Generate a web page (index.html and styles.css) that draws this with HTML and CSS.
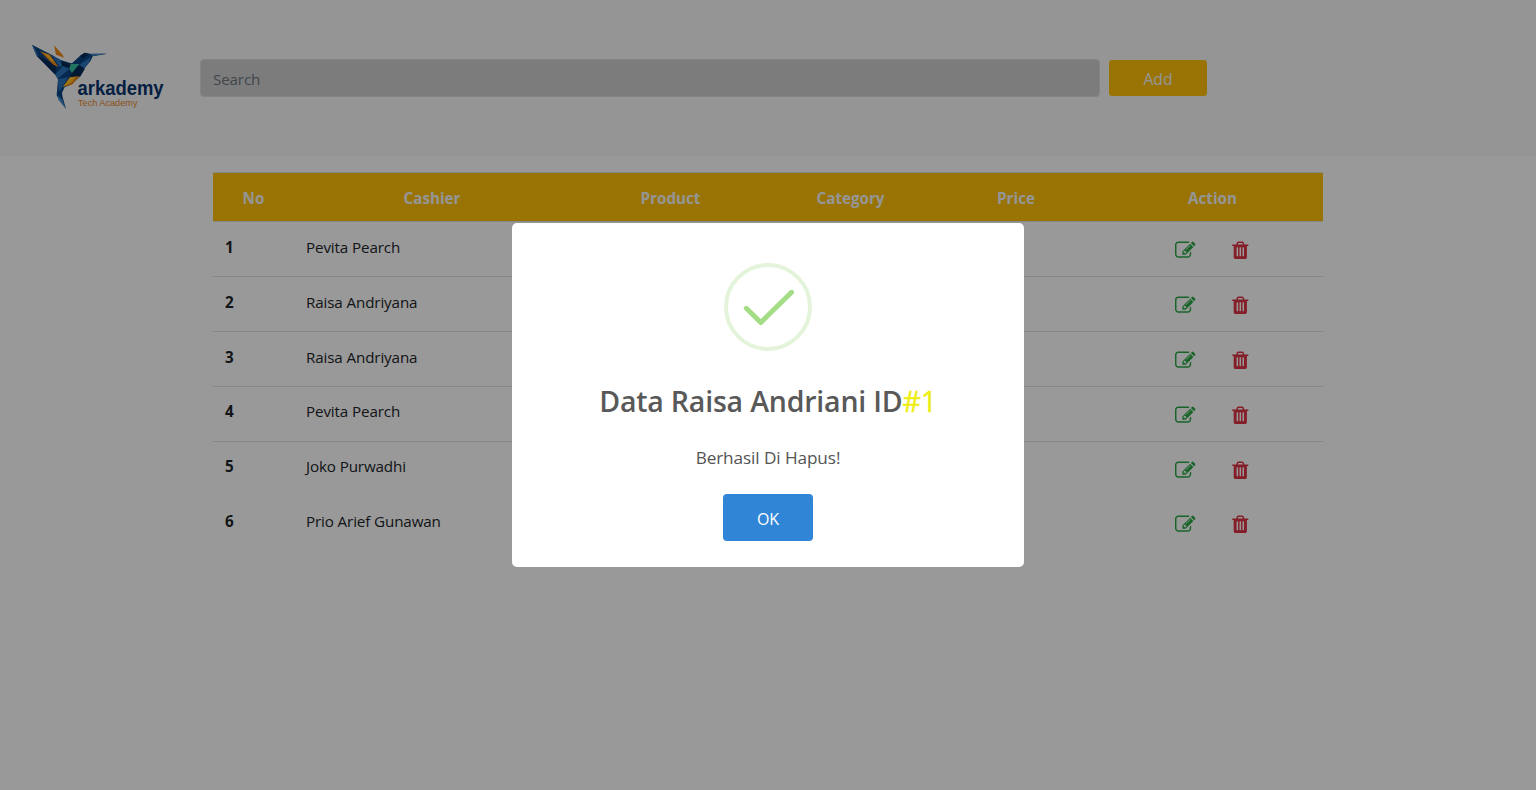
FILE: index.html
```html
<!DOCTYPE html>
<html lang="id">
<head>
<meta charset="utf-8">
<title>Arkademy</title>
<link rel="stylesheet" href="styles.css">
</head>
<body>
<svg class="sprite" aria-hidden="true">
  <symbol id="edit" viewBox="0 0 1792 1792"><path d="M888 1184l116-116-152-152-116 116v56h96v96h56zm440-720q-16-16-33 1l-350 350q-17 17-1 33t33-1l350-350q17-17 1-33zm80 594v190q0 119-84.500 203.500t-203.500 84.500h-832q-119 0-203.500-84.500t-84.500-203.500v-832q0-119 84.500-203.500t203.500-84.500h832q63 0 117 25 15 7 18 23 3 17-9 29l-49 49q-14 14-32 8-23-6-45-6h-832q-66 0-113 47t-47 113v832q0 66 47 113t113 47h832q66 0 113-47t47-113v-126q0-13 9-22l64-64q15-15 35-7t20 29zm-96-738l288 288-672 672h-288v-288zm444 132l-92 92-288-288 92-92q28-28 68-28t68 28l152 152q28 28 28 68t-28 68z"/></symbol>
  <symbol id="trash" viewBox="0 0 1792 1792"><path d="M704 1376v-704q0-14-9-23t-23-9h-64q-14 0-23 9t-9 23v704q0 14 9 23t23 9h64q14 0 23-9t9-23zm256 0v-704q0-14-9-23t-23-9h-64q-14 0-23 9t-9 23v704q0 14 9 23t23 9h64q14 0 23-9t9-23zm256 0v-704q0-14-9-23t-23-9h-64q-14 0-23 9t-9 23v704q0 14 9 23t23 9h64q14 0 23-9t9-23zm-544-992h448l-48-117q-7-9-17-11h-317q-10 2-17 11zm928 32v64q0 14-9 23t-23 9h-96v948q0 83-47 143.500t-113 60.500h-832q-66 0-113-58.500t-47-141.500v-952h-96q-14 0-23-9t-9-23v-64q0-14 9-23t23-9h309l70-167q15-37 54-63t79-26h320q40 0 79 26t54 63l70 167h309q14 0 23 9t9 23z"/></symbol>
</svg>
<header class="navbar">
  <svg class="logo" width="136" height="70" viewBox="0 0 136 70">
    <g transform="translate(-2 -3) scale(.3333)">
      <path fill="#0a4584" d="M6 14L60 42 92 60 118 68 126 70 152 46 164 38 178 41 232 41 188 49 182 62 166 82 150 110 122 134 104 142 96 158 98 172 108 206 86 178 80 166 84 118 76 104 20 48Z"/>
      <path fill="#3f86c6" d="M6 14L12 22 26 50 18 44Z"/>
      <path fill="#062a56" d="M20 46L56 64 78 80 76 104ZM90 62L124 72 118 84 98 78ZM118 84L126 98 120 110 150 110 164 88 144 74ZM150 48L164 38 178 42 158 56Z"/>
      <path fill="#f08a16" d="M72 16L98 44 102 53 78 44ZM30 34L60 44 86 82 70 74 56 60ZM120 112L150 108 126 134 98 141Z"/>
      <path fill="#ffc423" d="M40 38L54 44 74 66 64 62ZM120 112L138 110 122 128 100 140Z"/>
      <path fill="#2a75bb" d="M76 104L98 78 118 86 84 116ZM84 118L114 112 98 140 86 156ZM148 74L182 52 178 66 164 84ZM64 44L92 62 96 78 88 80Z"/>
      <path fill="#37c4a1" d="M122 72L148 72 126 99 118 86Z"/>
      <path fill="#3f86c6" d="M180 42L232 41 188 48ZM82 166L96 178 108 206 86 180Z"/>
    </g>
    <text class="logo-name" x="45.500" y="51.500" textLength="86" lengthAdjust="spacingAndGlyphs">arkademy</text>
    <text class="logo-sub" x="46" y="63" textLength="59.500" lengthAdjust="spacingAndGlyphs">Tech Academy</text>
  </svg>
  <input class="search" type="text" placeholder="Search">
  <button class="add">Add</button>
</header>
<main class="content">
  <table class="orders">
    <colgroup><col class="c-no"><col class="c-cashier"><col class="c-product"><col class="c-category"><col class="c-price"><col class="c-action"></colgroup>
    <thead><tr><th>No</th><th>Cashier</th><th>Product</th><th>Category</th><th>Price</th><th>Action</th></tr></thead>
    <tbody>
      <tr><th>1</th><td>Pevita Pearch</td><td></td><td></td><td></td><td><div class="actions"><svg class="edit"><use href="#edit"/></svg><svg class="trash"><use href="#trash"/></svg></div></td></tr>
      <tr><th>2</th><td>Raisa Andriyana</td><td></td><td></td><td></td><td><div class="actions"><svg class="edit"><use href="#edit"/></svg><svg class="trash"><use href="#trash"/></svg></div></td></tr>
      <tr><th>3</th><td>Raisa Andriyana</td><td></td><td></td><td></td><td><div class="actions"><svg class="edit"><use href="#edit"/></svg><svg class="trash"><use href="#trash"/></svg></div></td></tr>
      <tr><th>4</th><td>Pevita Pearch</td><td></td><td></td><td></td><td><div class="actions"><svg class="edit"><use href="#edit"/></svg><svg class="trash"><use href="#trash"/></svg></div></td></tr>
      <tr><th>5</th><td>Joko Purwadhi</td><td></td><td></td><td></td><td><div class="actions"><svg class="edit"><use href="#edit"/></svg><svg class="trash"><use href="#trash"/></svg></div></td></tr>
      <tr><th>6</th><td>Prio Arief Gunawan</td><td></td><td></td><td></td><td><div class="actions"><svg class="edit"><use href="#edit"/></svg><svg class="trash"><use href="#trash"/></svg></div></td></tr>
    </tbody>
  </table>
</main>
<div class="overlay">
  <section class="modal" role="dialog">
    <svg class="success" width="88" height="88" viewBox="0 0 88 88" fill="none">
      <circle cx="44" cy="44" r="42" stroke="#e4f4db" stroke-width="4"/>
      <path d="M22.300 45.300L36.800 59.500 67.500 29.300" stroke="#a5dc86" stroke-width="5" stroke-linecap="round" stroke-linejoin="round"/>
    </svg>
    <h2 class="title">Data Raisa Andriani ID<span class="mark">#1</span></h2>
    <p class="message">Berhasil Di Hapus!</p>
    <button class="ok">OK</button>
  </section>
</div>
</body>
</html>
```
FILE: styles.css
```css
* { box-sizing: border-box; }
body {
  margin: 0;
  height: 790px;
  overflow: hidden;
  background: #fff;
  color: #212529;
  font: 15.2px/24px "Open Sans", "Noto Sans", sans-serif;
}
button, input { font: inherit; }
.sprite { display: none; }

.navbar {
  display: flex;
  align-items: center;
  height: 156px;
  padding-left: 32px;
  background: #f8f9fa;
}
.logo { flex: none; margin-right: 32px; overflow: visible; }
.logo-name { font: bold 20.500px "Liberation Sans", sans-serif; fill: #07356e; }
.logo-sub { font: 9.800px "Liberation Sans", sans-serif; fill: #e8871e; }
.search {
  width: 900px;
  height: 38px;
  padding: 4px 12px 2px;
  border: 1px solid #dadde0;
  border-radius: 4px;
  background: #cfcfcf;
}
.search::placeholder { color: #6c757d; opacity: 1; letter-spacing: -.15px; }
.add {
  width: 98px;
  height: 36px;
  margin-left: 9px;
  padding: 1px 0 0;
  border: 0;
  border-radius: 3px;
  background: #ffc107;
  color: #f8f9fa;
  font-size: 15.700px;
}

.content { padding: 16px 213px 0; }
.orders {
  width: 1110px;
  table-layout: fixed;
  border-collapse: separate;
  border-spacing: 0;
}
.c-no { width: 81px; }
.c-cashier { width: 276px; }
.c-product { width: 201px; }
.c-category { width: 159px; }
.c-price { width: 172px; }
.c-action { width: 221px; }
.orders thead th {
  height: 50.400px;
  padding: 1px 0 0;
  border-top: 1px solid #dee2e6;
  border-bottom: 1px solid #dee2e6;
  background: #ffc107;
  color: #f8f9fa;
}
.orders tbody th, .orders td {
  height: 54.800px;
  padding: 12.700px 12px 0;
  border-bottom: 1px solid #dee2e6;
  vertical-align: top;
  text-align: left;
}
.orders tbody tr:nth-child(n+5) > * { border-bottom-color: transparent; }
.orders td { letter-spacing: -.13px; }
.actions { display: flex; gap: 34px; padding: 5.300px 0 0 61px; }
.actions svg { width: 20.600px; height: 20.600px; }
.edit { fill: #28a745; }
.trash { fill: #dc3545; }

.overlay {
  position: fixed;
  inset: 0;
  display: flex;
  align-items: center;
  justify-content: center;
  background: rgba(0, 0, 0, .4);
}
.modal {
  display: flex;
  flex-direction: column;
  align-items: center;
  width: 512px;
  height: 344px;
  padding-top: 40px;
  border-radius: 5px;
  background: #fff;
}
.success { flex: none; }
.title {
  margin: 30px 0 0;
  color: #595959;
  font-size: 28.500px;
  font-weight: 600;
  line-height: 40px;
  letter-spacing: -.2px;
}
.mark { color: #eeee11; font-weight: 500; -webkit-text-stroke: .4px #eeee11; }
.message { margin: 23px 0 0; color: #545454; font-size: 17.200px; line-height: 28px; letter-spacing: -.1px; }
.ok {
  width: 90px;
  height: 47px;
  margin-top: 22px;
  padding: 3px 0 0;
  border: 0;
  border-radius: 4px;
  background: #3085d6;
  color: #fff;
  font-size: 16px;
}
```
